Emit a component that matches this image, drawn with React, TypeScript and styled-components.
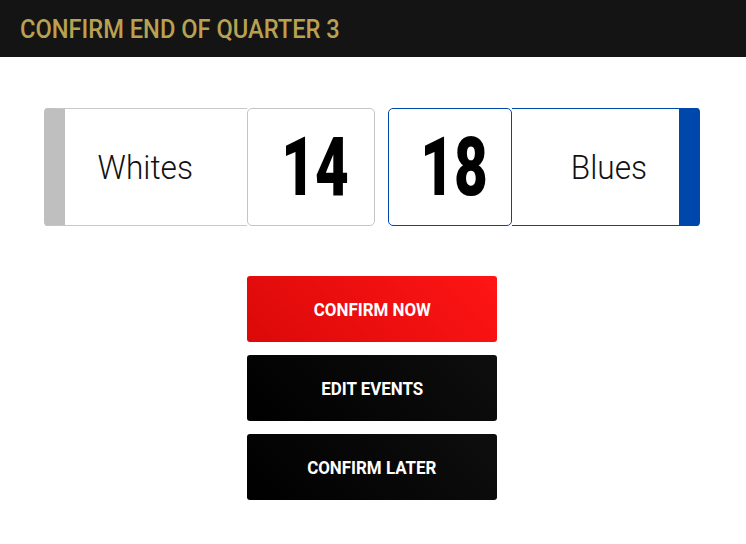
import React from "react";
import styled, { createGlobalStyle } from "styled-components";

const GlobalStyle = createGlobalStyle`
  body {
    margin: 0;
    background: #ffffff;
    font-family: Roboto, "Liberation Sans", sans-serif;
  }
`;

const Header = styled.header`
  height: 57px;
  background: #141414;
  display: flex;
  align-items: center;
  padding-left: 20px;
`;

const Title = styled.h1`
  margin: 0;
  font-size: 26px;
  font-weight: 500;
  color: #b9a152;
  transform: scaleX(0.91);
  transform-origin: left center;
  white-space: nowrap;
`;

const ScoreRow = styled.div`
  display: flex;
  gap: 13px;
  padding: 51px 0 0 44px;
`;

const Card = styled.div<{ $width: number; $reverse?: boolean }>`
  display: flex;
  flex-direction: ${p => (p.$reverse ? "row-reverse" : "row")};
  width: ${p => p.$width}px;
  height: 118px;
  border-radius: 4px;
  overflow: hidden;
`;

const NameArea = styled.div<{ $color: string; $border: string; $right?: boolean }>`
  flex: 1;
  display: flex;
  align-items: center;
  justify-content: center;
  border-top: 1px solid ${p => p.$border};
  border-bottom: 1px solid ${p => p.$border};
  ${p =>
    p.$right
      ? `border-right: 21px solid ${p.$color}; padding-left: 27px;`
      : `border-left: 21px solid ${p.$color}; padding-right: 21px;`}
  font-size: 34px;
  font-weight: 300;
  color: #111;
  span {
    display: inline-block;
    transform: scaleX(0.93);
  }
`;

const ScoreBox = styled.div<{ $width: number; $border: string }>`
  box-sizing: border-box;
  width: ${p => p.$width}px;
  border: 1px solid ${p => p.$border};
  border-radius: 5px;
  display: flex;
  align-items: center;
  justify-content: center;
  padding-left: 8px;
`;

const Score = styled.span`
  font-size: 81px;
  font-weight: 900;
  color: #000;
  line-height: 1;
  transform: scaleX(0.72);
`;

const Actions = styled.div`
  display: flex;
  flex-direction: column;
  align-items: center;
  gap: 13px;
  margin-top: 50px;
  padding-right: 2px;
`;

const ActionButton = styled.button<{ $primary?: boolean }>`
  width: 250px;
  height: 66px;
  border: none;
  border-radius: 3px;
  background: ${p =>
    p.$primary
      ? "linear-gradient(45deg, #db0909 0%, #ff1515 100%)"
      : "linear-gradient(45deg, #000000 0%, #0e0e0e 100%)"};
  color: #fff;
  font-family: Roboto, "Liberation Sans", sans-serif;
  font-size: 18px;
  font-weight: 700;
  cursor: pointer;
  span {
    display: inline-block;
    transform: scaleX(0.94);
  }
`;

export default function App() {
  return (
    <>
      <GlobalStyle />
      <Header>
        <Title>CONFIRM END OF QUARTER 3</Title>
      </Header>
      <ScoreRow>
        <Card $width={331}>
          <NameArea $color="#bfbfbf" $border="#c8c8c8">
            <span>Whites</span>
          </NameArea>
          <ScoreBox $width={128} $border="#c4c4c4">
            <Score>14</Score>
          </ScoreBox>
        </Card>
        <Card $width={312} $reverse>
          <NameArea $color="#0047ab" $border="#0047ab" $right>
            <span>Blues</span>
          </NameArea>
          <ScoreBox $width={124} $border="#0047ab">
            <Score>18</Score>
          </ScoreBox>
        </Card>
      </ScoreRow>
      <Actions>
        <ActionButton $primary>
          <span>CONFIRM NOW</span>
        </ActionButton>
        <ActionButton>
          <span>EDIT EVENTS</span>
        </ActionButton>
        <ActionButton>
          <span>CONFIRM LATER</span>
        </ActionButton>
      </Actions>
    </>
  );
}
